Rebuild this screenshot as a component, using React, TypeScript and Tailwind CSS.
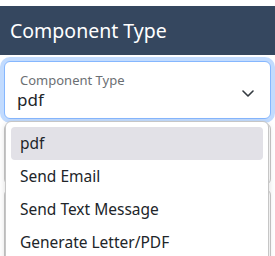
const items = ['pdf', 'Send Email', 'Send Text Message', 'Generate Letter/PDF'];

function Chevron() {
  return (
    <svg width="12" height="7" viewBox="0 0 12 7" fill="none">
      <polyline points="1,1 6,6 11,1" stroke="#343a40" strokeWidth="1.6" strokeLinecap="round" strokeLinejoin="round" />
    </svg>
  );
}

export default function App() {
  return (
    <div
      className="relative w-[275px] h-[256px] overflow-hidden bg-white"
      style={{ fontFamily: '"Noto Sans", "Open Sans", sans-serif' }}
    >
      <div className="mt-[6px] h-[49px] bg-[#35475f] px-[10px] flex items-center text-white text-[19.5px]">
        Component Type
      </div>

      <div className="px-[4px] pt-[6px]">
        <div className="relative h-[58px] rounded-[6px] border border-[#86b7fe] bg-white shadow-[0_0_0_4px_rgba(13,110,253,0.25)] pl-[12px] pr-[16px] pt-[9px] flex items-start justify-between">
          <div className="flex flex-col">
            <span className="pl-[3px] text-[13px] leading-[18px] text-[#6b6f73]">Component Type</span>
            <span className="text-[17px] leading-[22px] text-[#212529]">pdf</span>
          </div>
          <div className="pt-[19px]">
            <Chevron />
          </div>
        </div>

        <div className="mt-[4px] flex flex-col gap-[4px]">
          <div className="h-[62px] rounded-[6px] border border-[#c9c9c9]" />
          <div className="h-[80px] rounded-[6px] border border-[#c9c9c9]" />
        </div>
      </div>

      <div className="absolute left-[5px] top-[121px] w-[264px] rounded-[6px] border border-[#c6c6c6] bg-white p-[5px] shadow-[0_2px_6px_rgba(0,0,0,0.15)]">
        {items.map((item, i) => (
          <div
            key={item}
            className={
              'h-[33px] rounded-[4px] px-[9px] flex items-center text-[15.5px] text-[#212529] ' +
              (i === 0 ? 'bg-[#e2e1e7]' : '')
            }
          >
            {item}
          </div>
        ))}
      </div>
    </div>
  );
}
